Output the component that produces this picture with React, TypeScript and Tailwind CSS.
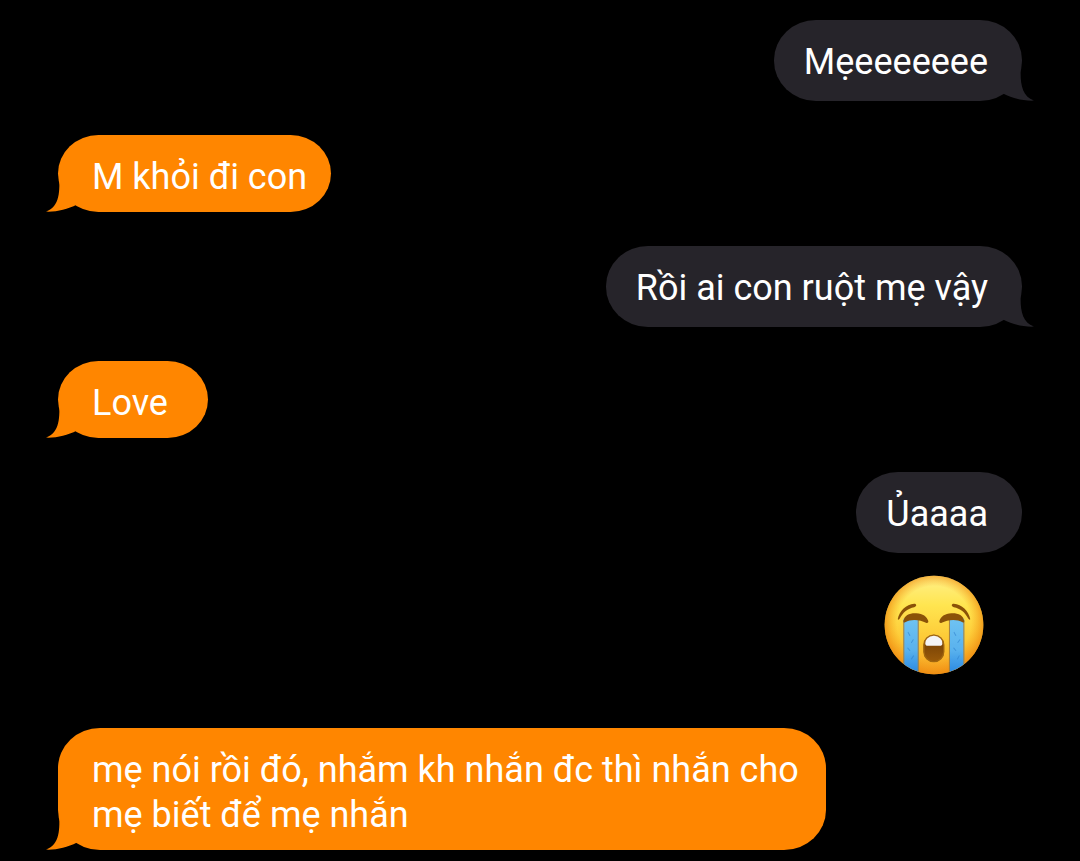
type Message = {
  id: number;
  from: "me" | "them";
  text: string;
  tail?: boolean;
  sticker?: boolean;
};

const messages: Message[] = [
  { id: 1, from: "me", text: "Mẹeeeeeee", tail: true },
  { id: 2, from: "them", text: "M khỏi đi con", tail: true },
  { id: 3, from: "me", text: "Rồi ai con ruột mẹ vậy", tail: true },
  { id: 4, from: "them", text: "Love", tail: true },
  { id: 5, from: "me", text: "Ủaaaa" },
  { id: 6, from: "me", text: "Loudly crying face", sticker: true },
  {
    id: 7,
    from: "them",
    text: "mẹ nói rồi đó, nhắm kh nhắn đc thì nhắn cho mẹ biết để mẹ nhắn",
    tail: true,
  },
];

function Tail({ side }: { side: "left" | "right" }) {
  return (
    <svg
      aria-hidden="true"
      viewBox="0 0 32 40"
      className={
        side === "left"
          ? "absolute bottom-0 -left-[13px] h-10 w-8 text-[#ff8600]"
          : "absolute bottom-0 -right-[13px] h-10 w-8 -scale-x-100 text-[#26242a]"
      }
    >
      <path
        fill="currentColor"
        d="M14 3 C15 18 15 35 1 39.6 C12 40 22 37.5 32 32.5 V3 Z"
      />
    </svg>
  );
}

function Bubble({ message }: { message: Message }) {
  if (message.from === "me") {
    return (
      <li className="relative self-end rounded-[42px/40px] bg-[#26242a] pt-5 pr-[34px] pb-4 pl-[30px]">
        {message.tail && <Tail side="right" />}
        <p className="relative">{message.text}</p>
      </li>
    );
  }
  return (
    <li className="relative max-w-[768px] min-w-[150px] self-start rounded-[42px/40px] bg-[#ff8600] pt-5 pr-6 pb-3 pl-[34px]">
      {message.tail && <Tail side="left" />}
      <p className="relative">{message.text}</p>
    </li>
  );
}

function CryingFace({ label }: { label: string }) {
  return (
    <svg
      role="img"
      aria-label={label}
      viewBox="42 44 298 298"
      className="size-[100px]"
    >
      <defs>
        <linearGradient id="face" x1="0" y1="0" x2="0" y2="1">
          <stop offset="0" stopColor="#fff08a" />
          <stop offset="0.3" stopColor="#ffe550" />
          <stop offset="0.65" stopColor="#fdc936" />
          <stop offset="1" stopColor="#f5a122" />
        </linearGradient>
        <radialGradient id="rim" cx="0.5" cy="0.48" r="0.52">
          <stop offset="0.72" stopColor="#f59a16" stopOpacity="0" />
          <stop offset="1" stopColor="#ee8a10" stopOpacity="0.85" />
        </radialGradient>
        <linearGradient id="tear" x1="0" y1="0" x2="0" y2="1">
          <stop offset="0" stopColor="#6fc3f2" />
          <stop offset="0.55" stopColor="#5ab2ee" />
          <stop offset="1" stopColor="#2585e0" />
        </linearGradient>
        <linearGradient id="mouth" x1="0" y1="0" x2="0" y2="1">
          <stop offset="0" stopColor="#6b3a05" />
          <stop offset="1" stopColor="#9a5a0a" />
        </linearGradient>
        <clipPath id="head">
          <circle cx="191" cy="193" r="147" />
        </clipPath>
        <clipPath id="lips">
          <rect x="160" y="222" width="61" height="81" rx="30" />
        </clipPath>
      </defs>
      <circle cx="191" cy="193" r="147" fill="url(#face)" />
      <circle cx="191" cy="193" r="147" fill="url(#rim)" />
      <g clipPath="url(#head)">
        <rect x="100" y="174" width="45" height="170" fill="url(#tear)" />
        <rect x="236" y="174" width="45" height="170" fill="url(#tear)" />
        <path
          d="M101 178V330M144 178V340M237 178V340M280 178V330"
          stroke="#a9803a"
          strokeWidth="3"
        />
        <path
          d="M114 215l5 9M129 237l-5 8M113 262l6 7M130 285l-6 9M251 215l5 9M268 237l-6 8M250 262l6 7M266 285l-5 9"
          stroke="#2f82cf"
          strokeWidth="3"
          strokeLinecap="round"
          opacity="0.6"
        />
      </g>
      <g fill="#8a5208">
        <path d="M83 175C88 151 108 132 132 130C140 130 140 138 132 140C113 144 98 155 89 174C87 178 83 178 83 175Z" />
        <path d="M299 175C294 151 274 132 250 130C242 130 242 138 250 140C269 144 284 155 293 174C295 178 299 178 299 175Z" />
        <path d="M100 181C102 164 119 157 138 158C158 159 170 168 174 181C175 186 171 188 167 186C151 178 124 173 105 185C102 187 99 185 100 181Z" />
        <path d="M281 181C279 164 262 157 243 158C223 159 211 168 207 181C206 186 210 188 214 186C230 178 257 173 276 185C279 187 282 185 281 181Z" />
      </g>
      <rect x="160" y="222" width="61" height="81" rx="30" fill="url(#mouth)" />
      <g clipPath="url(#lips)">
        <path
          d="M165 222H216V248Q216 255 208 255H173Q165 255 165 248Z"
          fill="#f4f4f6"
        />
      </g>
      <rect
        x="161"
        y="223"
        width="59"
        height="79"
        rx="29"
        fill="none"
        stroke="#a0660f"
        strokeWidth="4"
      />
    </svg>
  );
}

export default function App() {
  return (
    <main className="min-h-screen bg-black px-[58px] pt-5 pb-[11px] font-[Roboto,'Noto_Sans',sans-serif] text-[36px] leading-[45px] text-white">
      <ol className="flex flex-col gap-[34px]">
        {messages.map((message) =>
          message.sticker ? (
            <li key={message.id} className="-mt-3 mr-[38px] mb-[19px] self-end">
              <CryingFace label={message.text} />
            </li>
          ) : (
            <Bubble key={message.id} message={message} />
          ),
        )}
      </ol>
    </main>
  );
}
